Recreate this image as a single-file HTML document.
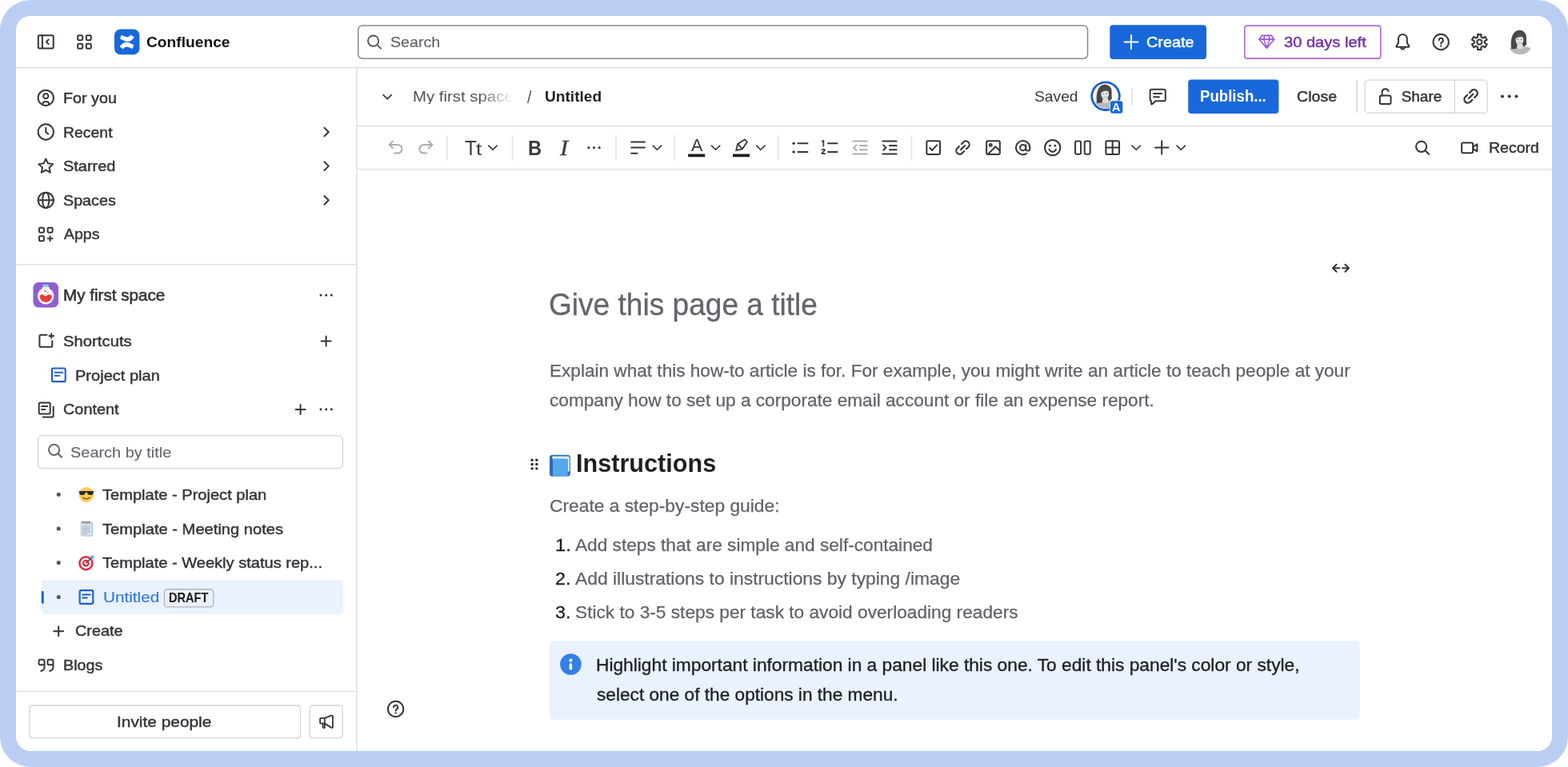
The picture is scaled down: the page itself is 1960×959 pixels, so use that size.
<!DOCTYPE html>
<html lang="en">
<head>
<meta charset="utf-8">
<title>Untitled - My first space - Confluence</title>
<style>
html,body{margin:0;padding:0;background:#fff;}
body{width:1960px;height:959px;overflow:hidden;position:relative;font-family:"Liberation Sans",Arial,sans-serif;}
#frame{position:absolute;left:0;top:0;width:1960px;height:959px;background:#bacef4;border-radius:38px;overflow:hidden;}
#app{position:absolute;left:20px;top:20px;width:1920px;height:919px;background:#fff;border-radius:18px;overflow:hidden;}
#c{will-change:transform;position:absolute;left:-20px;top:-20px;width:1960px;height:959px;}
#c > *{position:absolute;}
.t{white-space:pre;line-height:1;margin:0;padding:0;transform-origin:0 0;}
.b{box-sizing:border-box;}
.hl{height:1px;background:#dcdde0;}
.vl{width:1px;background:#dcdde0;}
svg.ic{left:0;top:0;width:1960px;height:959px;overflow:visible;pointer-events:none;}

</style>
</head>
<body>
<div id="frame">
<div id="app"><div id="c">

<svg class="ic" viewBox="0 0 1960 959" width="1960" height="959" fill="none" stroke-linecap="round" stroke-linejoin="round">
<rect x="20" y="83.93" width="1920" height="1.33" fill="#dcdde0" stroke="none"/>
<rect x="445.23" y="85.2" width="1.33" height="853.8" fill="#dcdde0" stroke="none"/>
<rect x="446.5" y="156.74" width="1493.5" height="1.33" fill="#dcdde0" stroke="none"/>
<rect x="446.5" y="210.94" width="1493.5" height="1.33" fill="#dcdde0" stroke="none"/>
<rect x="20" y="330.13" width="425.3" height="1.33" fill="#dcdde0" stroke="none"/>
<rect x="20" y="863.84" width="425.3" height="1.33" fill="#dcdde0" stroke="none"/>
<rect x="447.75" y="32.05" width="911.80" height="41.10" rx="5.25" fill="#fff" stroke="#858890" stroke-width="1.5"/>
<rect x="1387.30" y="31.30" width="120.70" height="42.60" rx="4" fill="#1868db" stroke="none"/>
<rect x="1555.80" y="32.10" width="170.00" height="41.00" rx="3.20" fill="#fff" stroke="#ab6ad3" stroke-width="1.6"/>
<rect x="1485.20" y="99.50" width="113.20" height="42.40" rx="4" fill="#1868db" stroke="none"/>
<rect x="1706.26" y="100.17" width="152.87" height="41.07" rx="3.83" fill="#fff" stroke="#d7d8db" stroke-width="1.33"/>
<rect x="1817.63" y="100" width="1.33" height="41.400000000000006" fill="#d7d8db" stroke="none"/>
<rect x="1414.10" y="110" width="1.6" height="21.599999999999994" fill="#dddee1" stroke="none"/>
<rect x="1695.20" y="100" width="2.2" height="41.19999999999999" fill="#dddee1" stroke="none"/>
<rect x="47.66" y="544.87" width="380.57" height="40.57" rx="4.33" fill="#fff" stroke="#d3d4d8" stroke-width="1.33"/>
<rect x="51.80" y="725.30" width="377.10" height="42.60" rx="4.5" fill="#e9f2fe" stroke="none"/>
<rect x="51.80" y="739.00" width="2.90" height="15.70" rx="1.3" fill="#1a5fc9" stroke="none"/>
<rect x="205.47" y="736.76" width="61.37" height="22.07" rx="3.54" fill="#eaf0fa" stroke="#b1b4ba" stroke-width="1.33"/>
<rect x="36.96" y="881.96" width="338.57" height="40.87" rx="3.83" fill="#fff" stroke="#d3d4d8" stroke-width="1.33"/>
<rect x="387.17" y="881.96" width="40.97" height="40.87" rx="3.83" fill="#fff" stroke="#d3d4d8" stroke-width="1.33"/>
<rect x="687.00" y="800.90" width="1012.80" height="98.90" rx="4" fill="#e9f2fe" stroke="none"/>
<g transform="translate(46.63 41.63) scale(1.3333)" stroke="#34363a" stroke-width="1.5" ><rect x="0.9" y="1.9" width="14.2" height="12.2" rx="1.2"/><path d="M4.7 2v12"/><path d="M10.5 5.9 8.5 8l2 2.1"/></g>
<g transform="translate(94.83 41.83) scale(1.3333)" stroke="#34363a" stroke-width="1.5" ><rect x="1.75" y="1.75" width="4.5" height="4.5" rx="1"/><rect x="9.75" y="1.75" width="4.5" height="4.5" rx="1"/><rect x="1.75" y="9.75" width="4.5" height="4.5" rx="1"/><rect x="9.75" y="9.75" width="4.5" height="4.5" rx="1"/></g>
<rect x="143.0" y="36.4" width="31.4" height="31.9" rx="7.6" fill="#1868db" stroke="none"/>
<g transform="translate(158.7 52.4)" fill="#fff" stroke="none"><path d="M-6.7 -8.6 C-4 -7.4 -1.5 -6 0.6 -6 C2.4 -6 3.6 -7.4 4.8 -8.8 L9 -6 C7.6 -3.6 4.5 -0.4 0.6 -0.4 C-2.4 -0.4 -5.6 -2.4 -8.8 -4.1 Z"/><path d="M-6.7 -8.6 C-4 -7.4 -1.5 -6 0.6 -6 C2.4 -6 3.6 -7.4 4.8 -8.8 L9 -6 C7.6 -3.6 4.5 -0.4 0.6 -0.4 C-2.4 -0.4 -5.6 -2.4 -8.8 -4.1 Z" transform="rotate(180)"/></g>
<g transform="translate(457.43 41.93) scale(1.3333)" stroke="#55575d" stroke-width="1.4" ><circle cx="6.9" cy="6.9" r="4.95"/><path d="M10.6 10.6l3.4 3.4"/></g>
<g transform="translate(1403.33 41.83) scale(1.3333)" stroke="#fff" stroke-width="1.5" ><path d="M8 1.7v12.6M1.7 8h12.6"/></g>
<g stroke="#a055d4" stroke-width="1.7" fill="none"><path d="M1577.2 44.4H1589.3L1592.7 49.2 1583.4 60.2 1574.1 49.2Z"/><path d="M1574.3 49.2H1592.5"/><path d="M1580.7 44.6 1579.7 49.2 1583.4 59.4 1587.1 49.2 1586.1 44.6" stroke-width="1.5"/></g>
<g transform="translate(1741.67 40.77) scale(1.4667)" stroke="#34363a" stroke-width="1.35" ><path d="M4.3 5.2a3.7 3.7 0 0 1 7.4 0v3.6l1.7 2.7a.5.5 0 0 1-.4.8H3a.5.5 0 0 1-.4-.8l1.7-2.7z"/><path d="M6.5 12.8a1.5 1.4 0 0 0 3 0"/></g>
<g transform="translate(1790.53 41.83) scale(1.3333)" stroke="#34363a" stroke-width="1.5" ><circle cx="8" cy="8" r="7.25"/><path d="M6.1 6.4a1.95 1.95 0 1 1 2.9 1.7c-.6.35-1 .8-1 1.4v.2"/><circle cx="8" cy="11.75" r=".6" fill="#34363a" stroke="#34363a" stroke-width=".6"/></g>
<g transform="translate(1837.99 41.29) scale(1.4133)" stroke="#34363a" stroke-width="1.5" ><path d="M6.48 3.55 L6.43 1.28 L9.57 1.28 L9.52 3.55 L11.09 4.46 L13.03 3.28 L14.60 6.00 L12.61 7.10 L12.61 8.90 L14.60 10.00 L13.03 12.72 L11.09 11.54 L9.52 12.45 L9.57 14.72 L6.43 14.72 L6.48 12.45 L4.91 11.54 L2.97 12.72 L1.40 10.00 L3.39 8.90 L3.39 7.10 L1.40 6.00 L2.97 3.28 L4.91 4.46Z" stroke-linejoin="round" stroke-width="1.5"/><circle cx="8" cy="8" r="2.2"/></g>
<g transform="translate(1900.2 52.6)" stroke="none"><clipPath id="av1900"><circle r="15.6"/></clipPath><g clip-path="url(#av1900)"><rect x="-15.6" y="-15.6" width="31.2" height="31.2" fill="#fbfbfb"/><g transform="scale(1.000)"><path d="M-16 16 L-15 9 C-12 5.5 -7 4.6 -1 4.6 C6 4.6 12 6 15 9.5 L16 16Z" fill="#b9b9b9"/><path d="M-10.6 9 C-12.6 2 -11.4 -9 -6 -13.2 C-2 -16 4 -15 6.6 -10.5 C8.6 -7 7.2 -2 8 3 C7 4.5 5 5.6 3 6 L-6 8.5 Z" fill="#474747"/><path d="M-3.4 2.6 L3 2.6 L4 7.4 C1.5 9 -2 9 -4.4 7.4Z" fill="#dedede"/><ellipse cx="-0.8" cy="-2.8" rx="5" ry="6.5" fill="#e3e3e3"/><path d="M-6.6 -3.6 C-5.6 -10.6 2.6 -11.6 5.4 -5 C2.4 -7.4 -2.6 -7.6 -6.6 -3.6Z" fill="#474747"/><ellipse cx="-2.8" cy="-3.2" rx="1" ry=".6" fill="#777"/><ellipse cx="1.6" cy="-3.2" rx="1" ry=".6" fill="#777"/><path d="M-2.4 1 C-1.2 1.9 0.4 1.9 1.4 1" stroke="#999" stroke-width=".8" fill="none"/></g></g></g>
<g transform="translate(473.53 110.33) scale(1.3333)" stroke="#34363a" stroke-width="1.5" ><path d="M4.1 6.2 8 10 11.9 6.2" stroke-width="1.25"/></g>
<g transform="translate(1382 120.2)" stroke="none"><circle r="18.700000000000003" fill="#1a5fcb"/><circle r="15.85" fill="#fff"/><clipPath id="av1382"><circle r="15.4"/></clipPath><g clip-path="url(#av1382)"><rect x="-15.4" y="-15.4" width="30.8" height="30.8" fill="#fbfbfb"/><g transform="scale(0.987)"><path d="M-16 16 L-15 9 C-12 5.5 -7 4.6 -1 4.6 C6 4.6 12 6 15 9.5 L16 16Z" fill="#b9b9b9"/><path d="M-10.6 9 C-12.6 2 -11.4 -9 -6 -13.2 C-2 -16 4 -15 6.6 -10.5 C8.6 -7 7.2 -2 8 3 C7 4.5 5 5.6 3 6 L-6 8.5 Z" fill="#474747"/><path d="M-3.4 2.6 L3 2.6 L4 7.4 C1.5 9 -2 9 -4.4 7.4Z" fill="#dedede"/><ellipse cx="-0.8" cy="-2.8" rx="5" ry="6.5" fill="#e3e3e3"/><path d="M-6.6 -3.6 C-5.6 -10.6 2.6 -11.6 5.4 -5 C2.4 -7.4 -2.6 -7.6 -6.6 -3.6Z" fill="#474747"/><ellipse cx="-2.8" cy="-3.2" rx="1" ry=".6" fill="#777"/><ellipse cx="1.6" cy="-3.2" rx="1" ry=".6" fill="#777"/><path d="M-2.4 1 C-1.2 1.9 0.4 1.9 1.4 1" stroke="#999" stroke-width=".8" fill="none"/></g></g></g>
<g stroke="none"><rect x="1387.2" y="125.6" width="16.8" height="16.8" rx="3.8" fill="#fff" opacity="0.85"/><rect x="1387.9" y="126.3" width="15.4" height="15.4" rx="3" fill="#1868db"/></g>
<g transform="translate(1434.93 108.23) scale(1.5333)" stroke="#34363a" stroke-width="1.3" ><path d="M1.75 3.5a1.25 1.25 0 0 1 1.25-1.25h10a1.25 1.25 0 0 1 1.25 1.25v7a1.25 1.25 0 0 1-1.25 1.25H6.2L3.4 14.4a.4.4 0 0 1-.65-.3V11.75A1.25 1.25 0 0 1 1.75 10.5z"/><path d="M4.7 5.75h6.6M4.7 8.5h4.4"/></g>
<g transform="translate(1721.03 109.93) scale(1.3333)" stroke="#34363a" stroke-width="1.5" ><rect x="2.85" y="7.2" width="10.3" height="7.9" rx="1.3"/><path d="M4.9 7.2V4.1a3.1 3.1 0 0 1 6-1.1"/></g>
<g transform="translate(1826.33 108.13) scale(1.5333)" stroke="#34363a" stroke-width="1.45" ><path d="M6.3 9.7 9.7 6.3"/><path d="M6.9 5.1 8.6 3.4a2.83 2.83 0 0 1 4 4L10.9 9.1"/><path d="M9.1 10.9 7.4 12.6a2.83 2.83 0 0 1-4-4L5.1 6.9"/></g>
<g transform="translate(1876.03 109.93) scale(1.3333)" stroke="#34363a" stroke-width="1.5" ><g fill="#34363a" stroke="none"><circle cx="1.45" cy="8" r="1.5"/><circle cx="8" cy="8" r="1.5"/><circle cx="14.55" cy="8" r="1.5"/></g></g>
<g transform="translate(484.03 173.03) scale(1.3333)" stroke="#aaacb0" stroke-width="1.5" ><path d="M5.2 2.6 1.9 5.9l3.3 3.3"/><path d="M2.2 5.9h7.6a4 4 0 0 1 0 8H7"/></g>
<g transform="translate(521.43 173.03) scale(1.3333)" stroke="#aaacb0" stroke-width="1.5" ><path d="M10.8 2.6l3.3 3.3-3.3 3.3"/><path d="M13.8 5.9H6.2a4 4 0 0 0 0 8H9"/></g>
<g transform="translate(605.33 173.93) scale(1.3333)" stroke="#34363a" stroke-width="1.5" ><path d="M4.1 6.2 8 10 11.9 6.2" stroke-width="1.25"/></g>
<g transform="translate(731.83 173.93) scale(1.3333)" stroke="#34363a" stroke-width="1.5" ><g fill="#34363a" stroke="none"><circle cx="3" cy="8" r="1.15"/><circle cx="8" cy="8" r="1.15"/><circle cx="13" cy="8" r="1.15"/></g></g>
<g transform="translate(786.83 173.93) scale(1.3333)" stroke="#34363a" stroke-width="1.5" ><path d="M1.7 2.6h12.6M1.7 8h12.6M1.7 13.4h5.6"/></g>
<g transform="translate(810.73 173.93) scale(1.3333)" stroke="#34363a" stroke-width="1.5" ><path d="M4.1 6.2 8 10 11.9 6.2" stroke-width="1.25"/></g>
<g transform="translate(883.93 173.93) scale(1.3333)" stroke="#34363a" stroke-width="1.5" ><path d="M4.1 6.2 8 10 11.9 6.2" stroke-width="1.25"/></g>
<g stroke="#34363a" stroke-width="1.8" fill="none"><path d="M930.9 174.4 L933.9 177.4 L927.9 186.2 L922.2 180.1 Z"/><path d="M922.2 180.1 L920.5 186.2 L922.1 187.8 L927.9 186.2"/><path d="M920.9 187.3l-0.9 0.9"/></g>
<g transform="translate(940.23 173.93) scale(1.3333)" stroke="#34363a" stroke-width="1.5" ><path d="M4.1 6.2 8 10 11.9 6.2" stroke-width="1.25"/></g>
<g stroke="none" fill="#1e1f21"><rect x="860.1" y="192.6" width="21.2" height="3.7" rx="0.5"/><rect x="916.0" y="192.6" width="21.2" height="3.7" rx="0.5"/></g>
<g transform="translate(989.43 173.93) scale(1.3333)" stroke="#34363a" stroke-width="1.5" ><path d="M6 4h9M6 12h9"/><g fill="#34363a" stroke="none"><circle cx="2" cy="4" r="1.3"/><circle cx="2" cy="12" r="1.3"/></g></g>
<g transform="translate(1026.43 173.93) scale(1.3333)" stroke="#34363a" stroke-width="1.5" ><path d="M6.5 4H15M6.5 12H15"/><path d="M0.9 2.2 2.2 1.4V6.4" stroke-width="1.3"/><path d="M0.8 10.1c.2-.8 2.6-1 2.6.3 0 .9-2.5 1.6-2.6 3.2h2.8" stroke-width="1.3"/></g>
<g transform="translate(1064.33 173.93) scale(1.3333)" stroke="#aaacb0" stroke-width="1.5" ><path d="M1.5 2h13M8 6h6.5M8 10h6.5M1.5 14h13"/><path d="M4.6 5.6 2.2 8l2.4 2.4"/></g>
<g transform="translate(1101.33 173.93) scale(1.3333)" stroke="#34363a" stroke-width="1.5" ><path d="M1.5 2h13M8 6h6.5M8 10h6.5M1.5 14h13"/><path d="M2.2 5.6 4.6 8l-2.4 2.4"/></g>
<g transform="translate(1156.03 173.93) scale(1.3333)" stroke="#34363a" stroke-width="1.5" ><rect x="1.75" y="1.75" width="12.5" height="12.5" rx="1.25"/><path d="M4.6 8.2l2.3 2.3 4.4-4.9"/></g>
<g transform="translate(1191.23 172.33) scale(1.5333)" stroke="#34363a" stroke-width="1.4" ><path d="M6.3 9.7 9.7 6.3"/><path d="M6.9 5.1 8.6 3.4a2.83 2.83 0 0 1 4 4L10.9 9.1"/><path d="M9.1 10.9 7.4 12.6a2.83 2.83 0 0 1-4-4L5.1 6.9"/></g>
<g transform="translate(1230.83 173.93) scale(1.3333)" stroke="#34363a" stroke-width="1.5" ><rect x="1.75" y="1.75" width="12.5" height="12.5" rx="1.25"/><circle cx="5.6" cy="5.6" r="1.1"/><path d="M3.2 14 10.2 7l4 4"/></g>
<g transform="translate(1268.03 173.93) scale(1.3333)" stroke="#34363a" stroke-width="1.5" ><circle cx="8" cy="8" r="2.7"/><path d="M10.7 5.4v3.6a1.9 1.9 0 0 0 3.8 0V8a6.5 6.5 0 1 0-3 5.5"/></g>
<g transform="translate(1305.03 173.93) scale(1.3333)" stroke="#34363a" stroke-width="1.5" ><circle cx="8" cy="8" r="7.25"/><path d="M4.8 9.6a3.4 3.4 0 0 0 6.4 0"/><g fill="#34363a" stroke="none"><circle cx="5.6" cy="6.2" r="1.05"/><circle cx="10.4" cy="6.2" r="1.05"/></g></g>
<g transform="translate(1342.73 173.93) scale(1.3333)" stroke="#34363a" stroke-width="1.5" ><rect x="1.0" y="1.95" width="5.25" height="12.1" rx="1"/><rect x="9.75" y="1.95" width="5.25" height="12.1" rx="1"/></g>
<g transform="translate(1380.03 173.93) scale(1.3333)" stroke="#34363a" stroke-width="1.5" ><rect x="1.75" y="1.75" width="12.5" height="12.5" rx="1.25"/><path d="M8 2v12M2 8h12"/></g>
<g transform="translate(1409.53 173.93) scale(1.3333)" stroke="#34363a" stroke-width="1.5" ><path d="M4.1 6.2 8 10 11.9 6.2" stroke-width="1.25"/></g>
<g transform="translate(1441.53 173.93) scale(1.3333)" stroke="#34363a" stroke-width="1.5" ><path d="M8 1.8v12.4M1.8 8h12.4"/></g>
<g transform="translate(1465.63 173.93) scale(1.3333)" stroke="#34363a" stroke-width="1.5" ><path d="M4.1 6.2 8 10 11.9 6.2" stroke-width="1.25"/></g>
<g transform="translate(1767.43 174.13) scale(1.3333)" stroke="#34363a" stroke-width="1.5" ><circle cx="6.9" cy="6.9" r="4.95"/><path d="M10.6 10.6l3.4 3.4"/></g>
<g transform="translate(1826.13 174.13) scale(1.3333)" stroke="#34363a" stroke-width="1.5" ><rect x="0.75" y="3.25" width="10.5" height="9.5" rx="1.25"/><path d="M11.5 7 15.2 4.6v6.8L11.5 9z"/></g>
<rect x="558.35" y="169" width="1.3" height="31.5" fill="#dcdde0" stroke="none"/>
<rect x="639.85" y="169" width="1.3" height="31.5" fill="#dcdde0" stroke="none"/>
<rect x="769.35" y="169" width="1.3" height="31.5" fill="#dcdde0" stroke="none"/>
<rect x="842.65" y="169" width="1.3" height="31.5" fill="#dcdde0" stroke="none"/>
<rect x="972.15" y="169" width="1.3" height="31.5" fill="#dcdde0" stroke="none"/>
<rect x="1138.85" y="169" width="1.3" height="31.5" fill="#dcdde0" stroke="none"/>
<g transform="translate(46.63 111.63) scale(1.3333)" stroke="#34363a" stroke-width="1.5" ><circle cx="8" cy="8" r="7.25"/><circle cx="8" cy="6.4" r="2.35"/><path d="M4.9 14.2c.1-1.6 1.3-2.6 3.1-2.6s3 1 3.1 2.6"/></g>
<g transform="translate(46.63 154.33) scale(1.3333)" stroke="#34363a" stroke-width="1.5" ><circle cx="8" cy="8" r="7.25"/><path d="M8 4v4.2l2.2 1.6"/></g>
<g transform="translate(46.63 196.73) scale(1.3333)" stroke="#34363a" stroke-width="1.5" ><path d="M8 1.4l2 4.3 4.7.6-3.5 3.2.9 4.7L8 11.9 3.9 14.2l.9-4.7L1.3 6.3 6 5.7z"/></g>
<g transform="translate(46.63 239.63) scale(1.3333)" stroke="#34363a" stroke-width="1.5" ><circle cx="8" cy="8" r="7.25"/><path d="M1 8h14"/><ellipse cx="8" cy="8" rx="3.1" ry="7.25"/></g>
<g transform="translate(46.63 282.33) scale(1.3333)" stroke="#34363a" stroke-width="1.5" ><rect x="1.75" y="1.75" width="4.5" height="4.5" rx="1"/><rect x="9.75" y="1.75" width="4.5" height="4.5" rx="1"/><rect x="1.75" y="9.75" width="4.5" height="4.5" rx="1"/><path d="M12 9.8v4.4M9.8 12h4.4"/></g>
<g transform="translate(397.43 154.33) scale(1.3333)" stroke="#34363a" stroke-width="1.5" ><path d="M6 4 10 8 6 12"/></g>
<g transform="translate(397.43 196.93) scale(1.3333)" stroke="#34363a" stroke-width="1.5" ><path d="M6 4 10 8 6 12"/></g>
<g transform="translate(397.43 239.63) scale(1.3333)" stroke="#34363a" stroke-width="1.5" ><path d="M6 4 10 8 6 12"/></g>
<g transform="translate(397.03 358.33) scale(1.3333)" stroke="#34363a" stroke-width="1.5" ><g fill="#34363a" stroke="none"><circle cx="3" cy="8" r="1.15"/><circle cx="8" cy="8" r="1.15"/><circle cx="13" cy="8" r="1.15"/></g></g>
<g transform="translate(47.03 415.13) scale(1.3333)" stroke="#34363a" stroke-width="1.5" ><path d="M8.6 2.65H3.05A1.25 1.25 0 0 0 1.8 3.9v8.9a1.25 1.25 0 0 0 1.25 1.25h9.4a1.25 1.25 0 0 0 1.25-1.25V8.4"/><path d="M12.9 1.5v4.2M10.8 3.6h4.2"/></g>
<g transform="translate(396.93 415.73) scale(1.3333)" stroke="#34363a" stroke-width="1.5" ><path d="M8 3.5v9M3.5 8h9"/></g>
<g transform="translate(62.73 458.13) scale(1.3333)" stroke="#1a5fc9" stroke-width="1.6" ><rect x="1.75" y="1.75" width="12.5" height="12.5" rx="1.25"/><path d="M4.5 5.75h7M4.5 8.75h4"/></g>
<g transform="translate(47.03 501.83) scale(1.3333)" stroke="#34363a" stroke-width="1.5" ><rect x="1.25" y="1.25" width="10.5" height="10.5" rx="1.25"/><path d="M3.8 4.7h5.4M3.8 7.7h3.2"/><path d="M14.75 5v8.5a1.25 1.25 0 0 1-1.25 1.25H5"/></g>
<g transform="translate(364.93 501.33) scale(1.3333)" stroke="#34363a" stroke-width="1.5" ><path d="M8 3.5v9M3.5 8h9"/></g>
<g transform="translate(397.03 501.13) scale(1.3333)" stroke="#34363a" stroke-width="1.5" ><g fill="#34363a" stroke="none"><circle cx="3" cy="8" r="1.15"/><circle cx="8" cy="8" r="1.15"/><circle cx="13" cy="8" r="1.15"/></g></g>
<g transform="translate(58.43 553.13) scale(1.3333)" stroke="#63666c" stroke-width="1.5" ><circle cx="6.9" cy="6.9" r="4.95"/><path d="M10.6 10.6l3.4 3.4"/></g>
<circle cx="73.3" cy="618.3" r="2.55" fill="#55575c" stroke="none"/>
<circle cx="73.3" cy="661" r="2.55" fill="#55575c" stroke="none"/>
<circle cx="73.3" cy="703.5" r="2.55" fill="#55575c" stroke="none"/>
<circle cx="73.3" cy="746.5" r="2.55" fill="#55575c" stroke="none"/>
<g transform="translate(97.33 735.83) scale(1.3333)" stroke="#1a5fc9" stroke-width="1.6" ><rect x="1.75" y="1.75" width="12.5" height="12.5" rx="1.25"/><path d="M4.5 5.75h7M4.5 8.75h4"/></g>
<g transform="translate(62.53 778.63) scale(1.3333)" stroke="#34363a" stroke-width="1.5" ><path d="M8 3.5v9M3.5 8h9"/></g>
<g transform="translate(46.73 821.33) scale(1.3333)" stroke="#34363a" stroke-width="1.5" ><path d="M6.6 7.4H2.4a1 1 0 0 1-1-1V3.6a1 1 0 0 1 1-1h3.2a1 1 0 0 1 1 1v6a3.4 3.4 0 0 1-3.2 3.6"/><path d="M14.8 7.4h-4.2a1 1 0 0 1-1-1V3.6a1 1 0 0 1 1-1h3.2a1 1 0 0 1 1 1v6a3.4 3.4 0 0 1-3.2 3.6"/></g>
<g transform="translate(397.63 891.63) scale(1.3333)" stroke="#34363a" stroke-width="1.4" ><rect x="1.85" y="4.67" width="4.35" height="5.07" rx="1"/><path d="M6.2 4.67 12.5 2.3a.9.9 0 0 1 1.23.85v9.7a.9.9 0 0 1-1.23.85L6.2 9.74"/><path d="M4.43 9.74v3.3a.88.88 0 0 0 .88.88h0a.88.88 0 0 0 .89-.88V9.74"/></g>
<rect x="41.50" y="353.00" width="31.60" height="31.50" rx="6.5" fill="#8f5fd0" stroke="none"/>
<g transform="translate(57.2 369.2)" stroke="none"><rect x="-3.5" y="-13.4" width="7" height="4.6" rx="1.3" fill="#8dd3e6"/><rect x="-4.6" y="-10.2" width="9.2" height="4" rx="1" fill="#fdf3f3"/><circle cx="0" cy="0.9" r="10.3" fill="#fdf3f3"/><path d="M-7.3 0.6 C-6.6 -1.2 -3.6 -1.6 -1.6 0.2 C-0.6 1.2 0.6 1.2 1.8 0 C3.6 -1.8 6.6 -1.2 7.4 0.8 C7.8 5 4.4 8.6 0 8.6 C-4.4 8.6 -7.8 5 -7.3 0.6Z" fill="#ea3d3a"/><circle cx="-0.6" cy="-5.1" r="1.15" fill="#ea3d3a"/><circle cx="2.5" cy="-3.5" r="0.75" fill="#ea3d3a"/></g>
<g transform="translate(107.9 618.4)" stroke="none"><circle r="9.5" fill="#fdcb58"/><path d="M-9.2 -4.4 H9.2 L9 -3 C8.6 -0.2 7 0.7 4.9 0.7 C2.9 0.7 1.6 -0.4 1 -2.6 H-1 C-1.6 -0.4 -2.9 0.7 -4.9 0.7 C-7 0.7 -8.6 -0.2 -9 -3Z" fill="#2b2b2b"/><path d="M-4.2 3.6 C-2.2 6 2.2 6 4.2 3.6" stroke="#7a5a22" stroke-width="1.4" fill="none" stroke-linecap="round"/></g>
<g transform="translate(108.1 661)" stroke="none"><rect x="-7.2" y="-8.4" width="15.2" height="17.8" rx="1.6" fill="#9cc3ea"/><rect x="-8" y="-8.4" width="14.6" height="17.0" rx="1.4" fill="#dde5ec"/><g fill="#9aa9b7"><rect x="-6" y="-3.6" width="10.6" height="1"/><rect x="-6" y="-1.2" width="10.6" height="1"/><rect x="-6" y="1.2" width="10.6" height="1"/><rect x="-6" y="3.6" width="10.6" height="1"/><rect x="-6" y="6" width="6.4" height="1"/></g><g fill="none" stroke="#66757f" stroke-width="1"><path d="M-6 -7.2a1.1 1.6 0 1 1 1.6 1.2"/><path d="M-3.2 -7.2a1.1 1.6 0 1 1 1.6 1.2"/><path d="M-0.4 -7.2a1.1 1.6 0 1 1 1.6 1.2"/><path d="M2.4 -7.2a1.1 1.6 0 1 1 1.6 1.2"/></g></g>
<g transform="translate(107.4 704.2)" stroke="none"><circle r="9.2" fill="#dd2e44"/><circle r="6.7" fill="#fff"/><circle r="4.4" fill="#dd2e44"/><circle r="2.1" fill="#fff"/><path d="M0.3 -0.3 L6.6 -6.6" stroke="#4a5a66" stroke-width="1.6" stroke-linecap="round" fill="none"/><path d="M5.2 -9.8 L9.8 -9.4 L9.6 -5 L6.4 -5.6 Z" fill="#55acee"/></g>
<g transform="translate(483.93 875.83) scale(1.3333)" stroke="#34363a" stroke-width="1.5" ><circle cx="8" cy="8" r="7.25"/><path d="M6.1 6.4a1.95 1.95 0 1 1 2.9 1.7c-.6.35-1 .8-1 1.4v.2"/><circle cx="8" cy="11.75" r=".6" fill="#34363a" stroke="#34363a" stroke-width=".6"/></g>
<g stroke="#34363a" stroke-width="2" fill="none"><path d="M1666.4 335.3h8M1670.6 330.8l-4.6 4.5 4.6 4.5"/><path d="M1678 335.3h8M1681.4 330.8l4.6 4.5-4.6 4.5"/></g>
<g fill="#1e1f21" stroke="none"><circle cx="665.1" cy="575.2" r="1.65"/><circle cx="665.1" cy="580.5" r="1.65"/><circle cx="665.1" cy="585.8" r="1.65"/><circle cx="670.8" cy="575.2" r="1.65"/><circle cx="670.8" cy="580.5" r="1.65"/><circle cx="670.8" cy="585.8" r="1.65"/></g>
<g stroke="none"><rect x="687.1" y="568.8" width="25.8" height="26.6" rx="3.4" fill="#2f6fb2"/><path d="M690.4 570.6 H709.8 C711.2 570.6 711.9 571.3 711.9 572.6 V588.6 L709.6 590.6 V574.2 H689.6 Z" fill="#dfe9f3"/><rect x="690.6" y="573.4" width="19.0" height="22.2" rx="2.4" fill="#55a7ee"/><path d="M687.2 572.4 C687.2 571.4 688 570.6 689 570.6 L690.9 573.6 V595.5 H690 C688.4 595.5 687.2 594.3 687.2 592.7 Z" fill="#2a6ab0"/></g>
<g stroke="none"><circle cx="713.4" cy="830.5" r="13.3" fill="#347fe8"/><circle cx="713.4" cy="825.7" r="2.15" fill="#fff"/><rect x="711.6" y="829.2" width="3.6" height="8.2" rx="1.5" fill="#fff"/></g>
</svg>

<div class="t" style="left:182.57px;top:44px;font-size:18.6px;color:#101214;font-weight:700;transform:scaleX(1.0319);">Confluence</div>
<div class="t" style="left:488.06px;top:43px;font-size:19px;color:#5e6167;transform:scaleX(1.0335);-webkit-text-stroke:0.15px #5e6167;">Search</div>
<div class="t" style="left:1432.53px;top:43px;font-size:19px;color:#fff;transform:scaleX(1.0420);-webkit-text-stroke:0.5px #fff;">Create</div>
<div class="t" style="left:1605.47px;top:43px;font-size:19px;color:#7534a0;transform:scaleX(1.0572);-webkit-text-stroke:0.5px #7534a0;">30 days left</div>
<div class="t" style="left:515.62px;top:111px;font-size:19px;color:#505258;transform:scaleX(1.0726);-webkit-mask-image:linear-gradient(90deg,#000 0,#000 78px,transparent 117px);mask-image:linear-gradient(90deg,#000 0,#000 78px,transparent 117px);">My first space</div>
<div class="t" style="left:658.60px;top:112px;font-size:21.5px;color:#505258;transform:scaleX(0.9000);">/</div>
<div class="t" style="left:681.19px;top:111px;font-size:19px;color:#1f2023;font-weight:700;transform:scaleX(1.0056);">Untitled</div>
<div class="t" style="left:1292.61px;top:111px;font-size:19px;color:#33353a;transform:scaleX(1.0131);">Saved</div>
<div class="t" style="left:1500.45px;top:111px;font-size:19.6px;color:#fff;font-weight:700;transform:scaleX(0.9506);">Publish...</div>
<div class="t" style="left:1620.51px;top:111px;font-size:19px;color:#33353a;transform:scaleX(1.0325);-webkit-text-stroke:0.45px #33353a;">Close</div>
<div class="t" style="left:1751.64px;top:111px;font-size:19px;color:#33353a;-webkit-text-stroke:0.45px #33353a;">Share</div>
<div class="t" style="left:1861.32px;top:175px;font-size:19px;color:#33353a;transform:scaleX(1.0248);-webkit-text-stroke:0.45px #33353a;">Record</div>
<div class="t" style="left:78.50px;top:113px;font-size:19px;color:#33353a;transform:scaleX(1.0388);-webkit-text-stroke:0.45px #33353a;">For you</div>
<div class="t" style="left:78.53px;top:156px;font-size:19px;color:#33353a;transform:scaleX(1.0223);-webkit-text-stroke:0.45px #33353a;">Recent</div>
<div class="t" style="left:79.11px;top:198px;font-size:19px;color:#33353a;transform:scaleX(1.0508);-webkit-text-stroke:0.45px #33353a;">Starred</div>
<div class="t" style="left:79.12px;top:241px;font-size:19px;color:#33353a;transform:scaleX(1.0379);-webkit-text-stroke:0.45px #33353a;">Spaces</div>
<div class="t" style="left:80.13px;top:283px;font-size:19px;color:#33353a;transform:scaleX(1.0272);-webkit-text-stroke:0.45px #33353a;">Apps</div>
<div class="t" style="left:78.50px;top:360px;font-size:19.3px;color:#33353a;transform:scaleX(1.0709);-webkit-text-stroke:0.55px #33353a;">My first space</div>
<div class="t" style="left:79.09px;top:417px;font-size:19px;color:#33353a;transform:scaleX(1.0677);-webkit-text-stroke:0.45px #33353a;">Shortcuts</div>
<div class="t" style="left:94.48px;top:460px;font-size:19px;color:#33353a;transform:scaleX(1.0545);-webkit-text-stroke:0.45px #33353a;">Project plan</div>
<div class="t" style="left:79.10px;top:502px;font-size:19px;color:#33353a;transform:scaleX(1.0461);-webkit-text-stroke:0.45px #33353a;">Content</div>
<div class="t" style="left:88.15px;top:556px;font-size:19px;color:#63666d;transform:scaleX(1.0492);-webkit-text-stroke:0.15px #63666d;">Search by title</div>
<div class="t" style="left:127.74px;top:609px;font-size:19px;color:#33353a;transform:scaleX(1.0562);-webkit-text-stroke:0.45px #33353a;">Template - Project plan</div>
<div class="t" style="left:127.74px;top:652px;font-size:19px;color:#33353a;transform:scaleX(1.0600);-webkit-text-stroke:0.45px #33353a;">Template - Meeting notes</div>
<div class="t" style="left:127.74px;top:694px;font-size:19px;color:#33353a;transform:scaleX(1.0557);-webkit-text-stroke:0.45px #33353a;">Template - Weekly status rep...</div>
<div class="t" style="left:128.99px;top:737px;font-size:19px;color:#3576dd;transform:scaleX(1.0899);-webkit-text-stroke:0.15px #3576dd;">Untitled</div>
<div class="t" style="left:211.20px;top:739px;font-size:16.2px;color:#17181a;font-weight:700;transform:scaleX(0.9000);">DRAFT</div>
<div class="t" style="left:94.20px;top:779px;font-size:19px;color:#33353a;transform:scaleX(1.0430);-webkit-text-stroke:0.45px #33353a;">Create</div>
<div class="t" style="left:78.51px;top:822px;font-size:19px;color:#33353a;transform:scaleX(1.0375);-webkit-text-stroke:0.45px #33353a;">Blogs</div>
<div class="t" style="left:145.92px;top:893px;font-size:19px;color:#33353a;transform:scaleX(1.0984);-webkit-text-stroke:0.45px #33353a;">Invite people</div>
<div class="t" style="left:686.45px;top:361px;font-size:39px;color:#62656c;transform:scaleX(0.9506);-webkit-text-stroke:0.3px #62656c;">Give this page a title</div>
<div class="t" style="left:686.57px;top:453px;font-size:22.4px;color:#5f6269;transform:scaleX(1.0089);-webkit-text-stroke:0.25px #5f6269;">Explain what this how-to article is for. For example, you might write an article to teach people at your</div>
<div class="t" style="left:686.72px;top:490px;font-size:22.4px;color:#5f6269;transform:scaleX(1.0104);-webkit-text-stroke:0.25px #5f6269;">company how to set up a corporate email account or file an expense report.</div>
<div class="t" style="left:719.86px;top:564px;font-size:31.5px;color:#1e1f21;font-weight:700;transform:scaleX(0.9718);">Instructions</div>
<div class="t" style="left:686.91px;top:622px;font-size:22.4px;color:#5f6269;transform:scaleX(1.0176);-webkit-text-stroke:0.25px #5f6269;">Create a step-by-step guide:</div>
<div class="t" style="left:693.55px;top:671px;font-size:22.4px;color:#1f2023;transform:scaleX(1.0581);-webkit-text-stroke:0.3px #1f2023;">1.</div>
<div class="t" style="left:719.43px;top:671px;font-size:22.4px;color:#5f6269;transform:scaleX(1.0115);-webkit-text-stroke:0.25px #5f6269;">Add steps that are simple and self-contained</div>
<div class="t" style="left:693.81px;top:713px;font-size:22.4px;color:#1f2023;transform:scaleX(1.0429);-webkit-text-stroke:0.3px #1f2023;">2.</div>
<div class="t" style="left:719.43px;top:713px;font-size:22.4px;color:#5f6269;transform:scaleX(1.0201);-webkit-text-stroke:0.25px #5f6269;">Add illustrations to instructions by typing /image</div>
<div class="t" style="left:693.84px;top:755px;font-size:22.4px;color:#1f2023;transform:scaleX(1.0414);-webkit-text-stroke:0.3px #1f2023;">3.</div>
<div class="t" style="left:718.71px;top:755px;font-size:22.4px;color:#5f6269;transform:scaleX(1.0131);-webkit-text-stroke:0.25px #5f6269;">Stick to 3-5 steps per task to avoid overloading readers</div>
<div class="t" style="left:744.81px;top:821px;font-size:22.4px;color:#1f2023;transform:scaleX(1.0152);-webkit-text-stroke:0.35px #1f2023;">Highlight important information in a panel like this one. To edit this panel&#x27;s color or style,</div>
<div class="t" style="left:745.61px;top:858px;font-size:22.4px;color:#1f2023;transform:scaleX(1.0117);-webkit-text-stroke:0.35px #1f2023;">select one of the options in the menu.</div>
<div class="t" style="left:580.85px;top:172px;font-size:26.6px;color:#3a3c41;transform:scaleX(0.9221);">T</div>
<div class="t" style="left:595.20px;top:177px;font-size:21.4px;color:#3a3c41;transform:scaleX(1.2167);">t</div>
<div class="t" style="left:659.51px;top:172px;font-size:26.3px;color:#3a3c41;font-weight:700;transform:scaleX(0.8993);">B</div>
<div class="t" style="left:699.71px;top:171px;font-size:27.5px;color:#3a3c41;font-family:'Liberation Serif', serif;font-style:italic;transform:scaleX(1.1081);-webkit-text-stroke:0.3px #3a3c41;">I</div>
<div class="t" style="left:864.00px;top:172px;font-size:21.3px;color:#33353a;">A</div>
<div class="t" style="left:1390.35px;top:127px;font-size:14.5px;color:#fff;font-weight:700;transform:scaleX(0.9942);">A</div>
</div></div>
</div>
</body>
</html>
